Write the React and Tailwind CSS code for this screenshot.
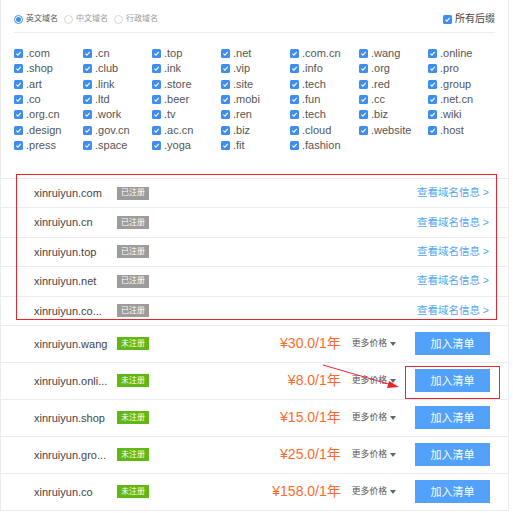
import React from 'react';

const suffixes = [
  '.com', '.cn', '.top', '.net', '.com.cn', '.wang', '.online',
  '.shop', '.club', '.ink', '.vip', '.info', '.org', '.pro',
  '.art', '.link', '.store', '.site', '.tech', '.red', '.group',
  '.co', '.ltd', '.beer', '.mobi', '.fun', '.cc', '.net.cn',
  '.org.cn', '.work', '.tv', '.ren', '.tech', '.biz', '.wiki',
  '.design', '.gov.cn', '.ac.cn', '.biz', '.cloud', '.website', '.host',
  '.press', '.space', '.yoga', '.fit', '.fashion',
];

const registered = ['xinruiyun.com', 'xinruiyun.cn', 'xinruiyun.top', 'xinruiyun.net', 'xinruiyun.co...'];

const available = [
  { name: 'xinruiyun.wang', price: '¥30.0/1年' },
  { name: 'xinruiyun.onli...', price: '¥8.0/1年' },
  { name: 'xinruiyun.shop', price: '¥15.0/1年' },
  { name: 'xinruiyun.gro...', price: '¥25.0/1年' },
  { name: 'xinruiyun.co', price: '¥158.0/1年' },
];

const Check = () => (
  <span className="w-[9px] h-[9px] rounded-[1.5px] bg-[#3d8ef0] flex items-center justify-center shrink-0">
    <svg width="7" height="7" viewBox="0 0 10 10">
      <path d="M2 5.2 L4.2 7.3 L8.2 2.8" fill="none" stroke="#fff" strokeWidth="1.6" />
    </svg>
  </span>
);

const Radio = ({ on, label }) => (
  <div className="flex items-center gap-[3px] w-[50px]">
    <span className={`w-[9px] h-[9px] rounded-full border flex items-center justify-center ${on ? 'border-[#3d8ef0]' : 'border-[#d5d5d5]'}`}>
      {on && <span className="w-[5px] h-[5px] rounded-full bg-[#3d8ef0]" />}
    </span>
    <span className={`text-[8px] leading-none ${on ? 'text-[#555]' : 'text-[#999]'}`}>{label}</span>
  </div>
);

export default function App() {
  return (
    <div className="relative w-[513px] h-[513px] bg-white overflow-hidden font-['Liberation_Sans','Noto_Sans_CJK_SC',sans-serif]">
      <div className="w-[509px] border-x border-[#ebebeb]">

        {/* 筛选面板 */}
        <div className="h-[179px] border-b border-[#ebebeb] px-[13px] pt-[13px]">
          <div className="h-[20px] pb-[7px] border-b border-[#ececec] flex items-center">
            <Radio on label="英文域名" />
            <Radio label="中文域名" />
            <Radio label="行政域名" />
            <div className="ml-auto flex items-center gap-[3px]">
              <Check />
              <span className="text-[10px] leading-none text-[#444]">所有后缀</span>
            </div>
          </div>
          <div className="mt-[13px] grid grid-cols-[repeat(7,69px)] auto-rows-[15.33px]">
            {suffixes.map((s, i) => (
              <div key={i} className="flex items-center gap-[3px]">
                <Check />
                <span className="text-[11px] leading-none text-[#555]">{s}</span>
              </div>
            ))}
          </div>
        </div>

        {/* 已注册 */}
        {registered.map((d) => (
          <div key={d} className="h-[29.4px] border-b border-[#ececec] flex items-center pl-[33px] pr-[19px]">
            <span className="w-[83px] text-[11px] text-[#444] whitespace-nowrap">{d}</span>
            <span className="w-[32px] h-[13px] bg-[#9c9c9c] text-white text-[8px] flex items-center justify-center">已注册</span>
            <span className="ml-auto text-[10.5px] text-[#52a6f2]">查看域名信息 &gt;</span>
          </div>
        ))}

        {/* 未注册 */}
        {available.map((d) => (
          <div key={d.name} className="h-[37px] border-b border-[#ececec] flex items-center pl-[33px] pr-[18px]">
            <span className="w-[83px] text-[11px] text-[#444] whitespace-nowrap">{d.name}</span>
            <span className="w-[32px] h-[13px] bg-[#62b812] text-white text-[8px] flex items-center justify-center">未注册</span>
            <span className="ml-auto text-[14px] text-[#ff6a2b] whitespace-nowrap">{d.price}</span>
            <span className="ml-[11px] flex items-center text-[8.8px] text-[#555] whitespace-nowrap">
              更多价格
              <span className="ml-[3px] w-0 h-0 border-x-[3px] border-x-transparent border-t-[4px] border-t-[#666]" />
            </span>
            <button className="ml-[19px] w-[75px] h-[23px] bg-[#52a1fb] text-white text-[11px]">加入清单</button>
          </div>
        ))}
      </div>

      {/* 标注 */}
      <div className="absolute left-[16px] top-[174px] w-[481px] h-[146px] border-[1.5px] border-[#e8262b]" />
      <div className="absolute left-[405px] top-[366px] w-[95px] h-[33px] border-[1.5px] border-[#e8262b]" />
      <svg className="absolute left-0 top-0" width="513" height="513">
        <line x1="323" y1="365" x2="392" y2="385" stroke="#e8262b" strokeWidth="1" />
        <polygon points="399,387 389,381 387,388" fill="#e8262b" />
      </svg>
    </div>
  );
}
